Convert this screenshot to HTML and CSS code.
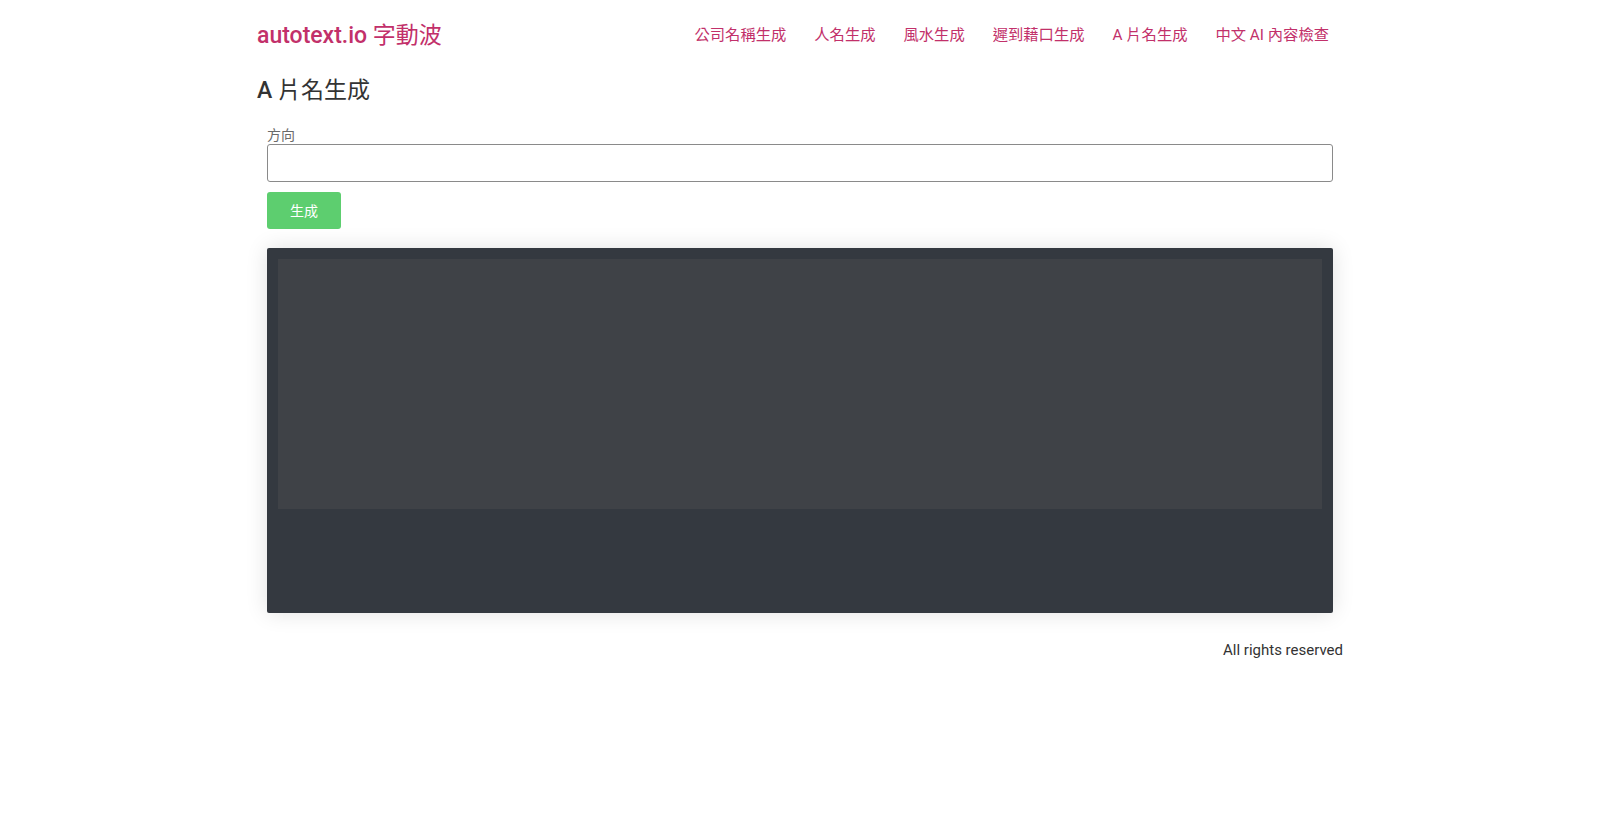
FILE: index.html
```html
<!DOCTYPE html>
<html lang="zh-Hant">
<head>
<meta charset="utf-8">
<title>A 片名生成 - autotext.io 字動波</title>
<link rel="stylesheet" href="styles.css">
</head>
<body>
<div class="container">
  <header class="site-header">
    <a class="brand" href="#">autotext.io <span class="cjk">字動波</span></a>
    <nav class="nav">
      <a href="#">公司名稱生成</a>
      <a href="#">人名生成</a>
      <a href="#">風水生成</a>
      <a href="#">遲到藉口生成</a>
      <a href="#">A 片名生成</a>
      <a href="#">中文 AI 內容檢查</a>
    </nav>
  </header>
  <main>
    <h1 class="title">A <span class="cjk">片名生成</span></h1>
    <form class="gen-form">
      <label class="label" for="dir">方向</label>
      <input class="input" id="dir" type="text">
      <button class="btn" type="button">生成</button>
      <div class="output">
        <div class="output-inner"></div>
      </div>
    </form>
  </main>
  <footer class="footer">All rights reserved</footer>
</div>
</body>
</html>
```

FILE: styles.css
```css
* { box-sizing: border-box; }
html, body {
  margin: 0;
  background: #fff;
  font-family: Roboto, "Noto Sans CJK TC", "Noto Sans", sans-serif;
  color: #333;
}
.container {
  width: 1086px;
  margin: 0 auto;
}
.site-header {
  height: 66px;
  display: flex;
  align-items: center;
  justify-content: space-between;
}
.brand {
  font-size: 23px;
  font-weight: 500;
  color: #c2306a;
  text-decoration: none;
}
.cjk {
  font-weight: 400;
}
.nav {
  display: flex;
}
.nav a {
  font-size: 15.3px;
  color: #c2306a;
  text-decoration: none;
  padding: 0 14px;
}
.title {
  margin: 9px 0 0;
  font-size: 23px;
  font-weight: 500;
  line-height: 32px;
  color: #333;
}
.gen-form {
  margin-top: 20px;
  padding: 0 10px;
}
.label {
  display: block;
  font-size: 14px;
  line-height: 17px;
  color: #6a6a6a;
}
.input {
  display: block;
  width: 100%;
  height: 38px;
  border: 1px solid #8a8a8a;
  border-radius: 3px;
  background: #fff;
}
.btn {
  display: block;
  margin-top: 10px;
  width: 74px;
  height: 37px;
  padding: 0 0 2px;
  border: 0;
  border-radius: 3px;
  background: #5dce6f;
  color: #fff;
  font-family: inherit;
  font-size: 14px;
}
.output {
  margin-top: 19px;
  height: 365px;
  padding: 11px;
  background: #343940;
  border-radius: 2px;
  box-shadow: 0 0 22px rgba(0,0,0,0.12);
}
.output-inner {
  height: 250px;
  background: #3f4247;
}
.footer {
  margin-top: 28px;
  text-align: right;
  font-size: 15px;
  color: #333;
}
```
